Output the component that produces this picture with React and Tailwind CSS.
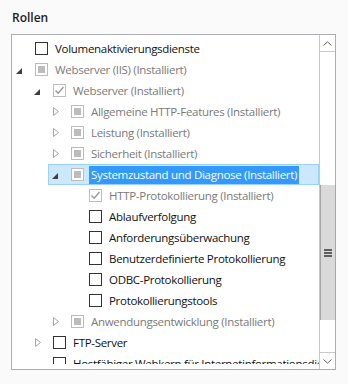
import React from 'react';

const rows = [
  { level: 0, arrow: null, box: 'empty', label: 'Volumenaktivierungsdienste' },
  { level: 0, arrow: 'open', box: 'partial', label: 'Webserver (IIS) (Installiert)', off: true },
  { level: 1, arrow: 'open', box: 'checked', label: 'Webserver (Installiert)', off: true },
  { level: 2, arrow: 'closed', box: 'partial', label: 'Allgemeine HTTP-Features (Installiert)', off: true },
  { level: 2, arrow: 'closed', box: 'partial', label: 'Leistung (Installiert)', off: true },
  { level: 2, arrow: 'closed', box: 'partial', label: 'Sicherheit (Installiert)', off: true },
  { level: 2, arrow: 'open', box: 'partial', label: 'Systemzustand und Diagnose (Installiert)', off: true, selected: true },
  { level: 3, arrow: null, box: 'checked', label: 'HTTP-Protokollierung (Installiert)', off: true },
  { level: 3, arrow: null, box: 'empty', label: 'Ablaufverfolgung' },
  { level: 3, arrow: null, box: 'empty', label: 'Anforderungsüberwachung' },
  { level: 3, arrow: null, box: 'empty', label: 'Benutzerdefinierte Protokollierung' },
  { level: 3, arrow: null, box: 'empty', label: 'ODBC-Protokollierung' },
  { level: 3, arrow: null, box: 'empty', label: 'Protokollierungstools' },
  { level: 2, arrow: 'closed', box: 'partial', label: 'Anwendungsentwicklung (Installiert)', off: true },
  { level: 1, arrow: 'closed', box: 'empty', label: 'FTP-Server' },
  { level: 1, arrow: null, box: 'empty', label: 'Hostfähiger Webkern für Internetinformationsdienste' },
];

const indent = ['pl-0', 'pl-[18px]', 'pl-[36px]', 'pl-[54px]'];

function Arrow({ kind }) {
  if (kind === 'open') {
    return (
      <svg width="6" height="6" viewBox="0 0 6 6" className="ml-[3px] mt-[2px]">
        <path d="M6 0 L6 6 L0 6 Z" fill="#404040" />
      </svg>
    );
  }
  if (kind === 'closed') {
    return (
      <svg width="6" height="9" viewBox="0 0 6 9" className="ml-[4px]">
        <path d="M0.5 0.5 L5.5 4.5 L0.5 8.5 Z" fill="none" stroke="#a6a6a6" />
      </svg>
    );
  }
  return null;
}

function Box({ kind, off }) {
  const border = off ? 'border-[#bcbcbc]' : 'border-[#333333]';
  return (
    <div className={`w-[13px] h-[13px] border bg-white flex items-center justify-center shrink-0 ${border}`}>
      {kind === 'partial' && <div className="w-[7px] h-[7px] bg-[#bcbcbc]" />}
      {kind === 'checked' && (
        <svg width="11" height="11" viewBox="0 0 11 11">
          <path d="M1.5 5.5 L4.2 8.3 L9.5 2" fill="none" stroke="#9a9a9a" strokeWidth="1.4" />
        </svg>
      )}
    </div>
  );
}

function Row({ r }) {
  return (
    <div className={`h-[21px] flex items-center whitespace-nowrap overflow-hidden ${indent[r.level]}`}>
      <div
        className={`flex-1 min-w-0 h-full flex items-center border ${
          r.selected ? 'bg-[#cce8ff] border-[#99d1ff]' : 'border-transparent'
        }`}
      >
        <div className="w-[22px] shrink-0 flex items-center">
          <Arrow kind={r.arrow} />
        </div>
        <Box kind={r.box} off={r.off} />
        <span
          className={`ml-[5px] px-[2px] leading-[18px] ${
            r.selected ? 'bg-[#3399ff] text-white' : r.off ? 'text-[#7a7a7a]' : 'text-[#111111]'
          }`}
        >
          {r.label}
        </span>
      </div>
    </div>
  );
}

function Chevron({ up }) {
  return (
    <svg width="9" height="5" viewBox="0 0 9 5">
      <path d={up ? 'M0.5 4.5 L4.5 0.8 L8.5 4.5' : 'M0.5 0.5 L4.5 4.2 L8.5 0.5'} fill="none" stroke="#606060" />
    </svg>
  );
}

export default function App() {
  return (
    <div className="w-[348px] h-[384px] bg-[#fafafa] overflow-hidden text-[11.5px] tracking-[-0.3px]" style={{ fontFamily: '"Open Sans", "Noto Sans", sans-serif' }}>
      <h2 className="pt-[9px] pl-[12px] h-[34px] font-semibold text-[12px] tracking-normal text-[#1e1e1e]">Rollen</h2>
      <div className="ml-[11px] w-[325px] h-[336px] border border-[#abadb3] bg-white flex">
        <div className="flex-1 min-w-0 pb-[5px]">
          <div className="h-full overflow-hidden pt-[3px]">
            {rows.map((r, i) => (
              <Row key={i} r={r} />
            ))}
          </div>
        </div>
        <div className="w-[16px] shrink-0 border-l border-[#c8c8c8] flex flex-col">
          <div className="h-[17px] border-b border-[#c8c8c8] flex items-center justify-center">
            <Chevron up />
          </div>
          <div className="h-[133px]" />
          <div className="h-[135px] bg-[#dadada] border-x border-[#a6a6a6] -mr-px flex items-center justify-center">
            <svg width="8" height="8" viewBox="0 0 8 8">
              <rect x="0" y="0" width="8" height="2" fill="#606060" />
              <rect x="0" y="3" width="8" height="2" fill="#606060" />
              <rect x="0" y="6" width="8" height="2" fill="#606060" />
            </svg>
          </div>
          <div className="flex-1" />
          <div className="h-[17px] border-t border-[#c8c8c8] flex items-center justify-center">
            <Chevron />
          </div>
        </div>
      </div>
    </div>
  );
}
